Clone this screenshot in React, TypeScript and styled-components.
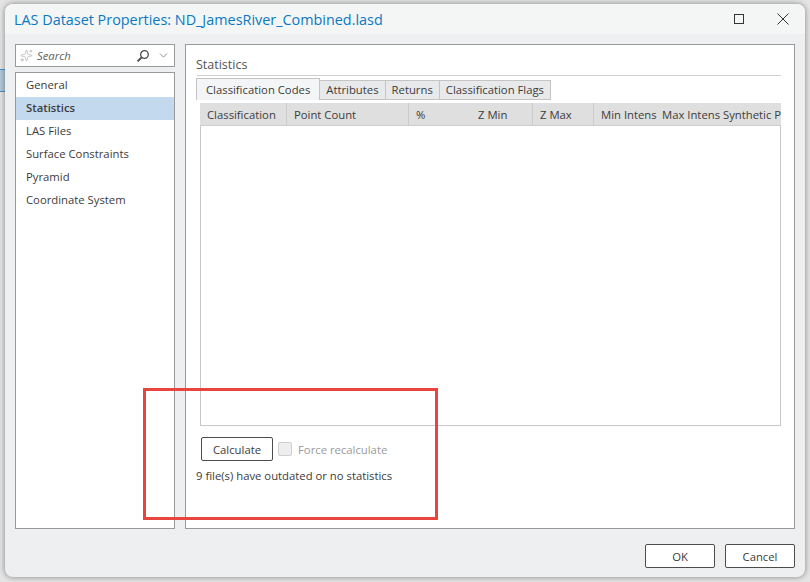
import styled, { createGlobalStyle } from "styled-components";
import { ChevronDown, Sparkles } from "lucide-react";

const GlobalStyle = createGlobalStyle`
  html, body {
    margin: 0;
    padding: 0;
    background: #e4e4e4;
  }
  body {
    font-family: "Open Sans", "Noto Sans", sans-serif;
    font-size: 11.3px;
    color: #3c3c3c;
  }
`;

const Page = styled.div`
  position: relative;
  width: 810px;
  height: 582px;
  overflow: hidden;
  box-sizing: border-box;
  padding: 4px 5px 5px;
`;

const BackdropTab = styled.div`
  position: absolute;
  left: 0;
  top: 69px;
  width: 5px;
  height: 23px;
  background: #b4c8da;
  border-top: 1px solid #4a90c8;
  border-bottom: 1px solid #4a90c8;
  box-sizing: border-box;
`;

const Dialog = styled.div`
  position: relative;
  display: flex;
  flex-direction: column;
  height: 100%;
  background: #eeeff1;
  border-radius: 8px;
  box-shadow: 0 0 5px 1px rgba(0, 0, 0, 0.32);
  overflow: hidden;
`;

const TitleBar = styled.div`
  display: flex;
  align-items: center;
  height: 30px;
  flex: none;
  background: #f4f6f6;
  padding-left: 9px;
  padding-right: 16px;
`;

const Title = styled.div`
  flex: 1;
  font-size: 14.4px;
  color: #0a79c2;
`;

const WindowButton = styled.svg`
  width: 12px;
  height: 12px;
  margin-left: 32px;
  fill: none;
  stroke: #333;
  stroke-width: 1;
`;

const Body = styled.div`
  flex: 1;
  display: flex;
  gap: 10px;
  padding: 10px 10px 0;
  min-height: 0;
`;

const Sidebar = styled.div`
  flex: none;
  width: 160px;
  display: flex;
  flex-direction: column;
  gap: 5px;
`;

const SearchBox = styled.div`
  height: 23px;
  box-sizing: border-box;
  display: flex;
  align-items: center;
  background: #fff;
  border: 1px solid #9a9a9a;
  padding: 0 4px;
`;

const SearchHint = styled.span`
  flex: 1;
  margin-left: 4px;
  font-style: italic;
  color: #5f5f5f;
`;

const NavList = styled.div`
  flex: 1;
  background: #fff;
  border: 1px solid #9a9a9a;
  padding-top: 1px;
`;

const NavItem = styled.div<{ $active?: boolean }>`
  height: 23px;
  line-height: 22px;
  padding-left: 10px;
  font-weight: ${(props) => (props.$active ? 600 : 400)};
  background: ${(props) => (props.$active ? "#c3d9ed" : "transparent")};
`;

const Panel = styled.div`
  flex: 1;
  min-width: 0;
  display: flex;
  flex-direction: column;
  background: #fff;
  border: 1px solid #9a9a9a;
  padding: 11px 13px 0 6px;
`;

const Heading = styled.div`
  font-size: 12.5px;
  color: #555;
  line-height: 17px;
  height: 20px;
  box-sizing: border-box;
  margin-left: 5px;
  text-indent: -1px;
  border-bottom: 1px solid #cfcfcf;
`;

const Tabs = styled.div`
  display: flex;
  margin-top: 2px;
  padding-left: 4px;
  height: 22px;
  align-items: flex-end;
`;

const Tab = styled.div<{ $active?: boolean }>`
  box-sizing: border-box;
  height: ${(props) => (props.$active ? "22px" : "20px")};
  line-height: ${(props) => (props.$active ? "21px" : "18px")};
  padding: 0 ${(props) => (props.$active ? "9px" : "6px")};
  background: ${(props) => (props.$active ? "#f4f5f6" : "#e8e9eb")};
  border: 1px solid #c4c4c4;
  border-bottom: ${(props) => (props.$active ? "none" : "1px solid #c4c4c4")};
  margin-left: ${(props) => (props.$active ? "0" : "-1px")};
  white-space: nowrap;
`;

const Grid = styled.div`
  height: 323px;
  flex: none;
  margin: 3px 0 0 8px;
  box-sizing: border-box;
  border: 1px solid #c8c8c8;
  border-top: none;
  background: #fff;
`;

const GridHeader = styled.div`
  display: flex;
  height: 23px;
  margin: 0 -1px;
  background: #dfdfdf;
  border-bottom: 1px solid #cdcdcd;
  box-sizing: border-box;
  overflow: hidden;
`;

const HeaderCell = styled.div<{ $width: number; $divider?: boolean }>`
  flex: none;
  box-sizing: border-box;
  width: ${(props) => props.$width}px;
  line-height: 23px;
  padding: 0 0 0 7px;
  white-space: nowrap;
  border-right: ${(props) => (props.$divider ? "1px solid #cbcbcb" : "none")};
`;

const ActionRow = styled.div`
  display: flex;
  align-items: center;
  margin: 11px 0 0 9px;
`;

const Button = styled.button<{ $width: number }>`
  width: ${(props) => props.$width}px;
  height: 24px;
  box-sizing: border-box;
  background: #fff;
  border: 1px solid #4c4c4c;
  border-radius: 2px;
  font: inherit;
  color: #3c3c3c;
  padding: 0;
`;

const CheckBox = styled.div`
  width: 14px;
  height: 14px;
  box-sizing: border-box;
  margin-left: 5px;
  background: #eeeeee;
  border: 1px solid #cfcfcf;
  border-radius: 2px;
`;

const CheckLabel = styled.span`
  margin-left: 6px;
  color: #9b9b9b;
`;

const StatusText = styled.div`
  margin: 7px 0 0 4px;
  line-height: 16px;
`;

const Footer = styled.div`
  flex: none;
  height: 48px;
  box-sizing: border-box;
  display: flex;
  justify-content: flex-end;
  align-items: flex-start;
  gap: 10px;
  padding: 15px 10px 0 0;
`;

const Callout = styled.div`
  position: absolute;
  left: 143px;
  top: 388px;
  width: 295px;
  height: 132px;
  box-sizing: border-box;
  border: 3px solid #e8453f;
`;

const navItems = [
  "General",
  "Statistics",
  "LAS Files",
  "Surface Constraints",
  "Pyramid",
  "Coordinate System",
];

const tabs = ["Classification Codes", "Attributes", "Returns", "Classification Flags"];

const columns = [
  { label: "Classification", width: 87, divider: true },
  { label: "Point Count", width: 122, divider: true },
  { label: "%", width: 62, divider: false },
  { label: "Z Min", width: 62, divider: true },
  { label: "Z Max", width: 61, divider: true },
  { label: "Min Intens", width: 61, divider: false },
  { label: "Max Intens", width: 61, divider: false },
  { label: "Synthetic P", width: 64, divider: false },
];

function SearchGlass() {
  return (
    <svg width="14" height="14" viewBox="0 0 14 14" fill="none" stroke="#4a4a4a">
      <circle cx="8.5" cy="5.5" r="3.8" strokeWidth="1.3" />
      <path d="M5.6 8.4 1.6 12.4" strokeWidth="2" />
    </svg>
  );
}

export default function App() {
  return (
    <Page>
      <GlobalStyle />
      <BackdropTab />
      <Dialog>
        <TitleBar>
          <Title>LAS Dataset Properties: ND_JamesRiver_Combined.lasd</Title>
          <WindowButton viewBox="0 0 12 12">
            <rect x="1.5" y="1.5" width="9" height="9" />
          </WindowButton>
          <WindowButton viewBox="0 0 12 12">
            <path d="M0.5 0.5 11.5 11.5M11.5 0.5 0.5 11.5" />
          </WindowButton>
        </TitleBar>
        <Body>
          <Sidebar>
            <SearchBox>
              <Sparkles size={13} strokeWidth={1} color="#9a9a9a" />
              <SearchHint>Search</SearchHint>
              <SearchGlass />
              <ChevronDown size={13} strokeWidth={1.3} color="#666" style={{ marginLeft: 7 }} />
            </SearchBox>
            <NavList>
              {navItems.map((item) => (
                <NavItem key={item} $active={item === "Statistics"}>
                  {item}
                </NavItem>
              ))}
            </NavList>
          </Sidebar>
          <Panel>
            <Heading>Statistics</Heading>
            <Tabs>
              {tabs.map((tab, i) => (
                <Tab key={tab} $active={i === 0}>
                  {tab}
                </Tab>
              ))}
            </Tabs>
            <Grid>
              <GridHeader>
                {columns.map((col) => (
                  <HeaderCell key={col.label} $width={col.width} $divider={col.divider}>
                    {col.label}
                  </HeaderCell>
                ))}
              </GridHeader>
            </Grid>
            <ActionRow>
              <Button $width={72}>Calculate</Button>
              <CheckBox />
              <CheckLabel>Force recalculate</CheckLabel>
            </ActionRow>
            <StatusText>9 file(s) have outdated or no statistics</StatusText>
          </Panel>
        </Body>
        <Footer>
          <Button $width={70}>OK</Button>
          <Button $width={70}>Cancel</Button>
        </Footer>
      </Dialog>
      <Callout />
    </Page>
  );
}
